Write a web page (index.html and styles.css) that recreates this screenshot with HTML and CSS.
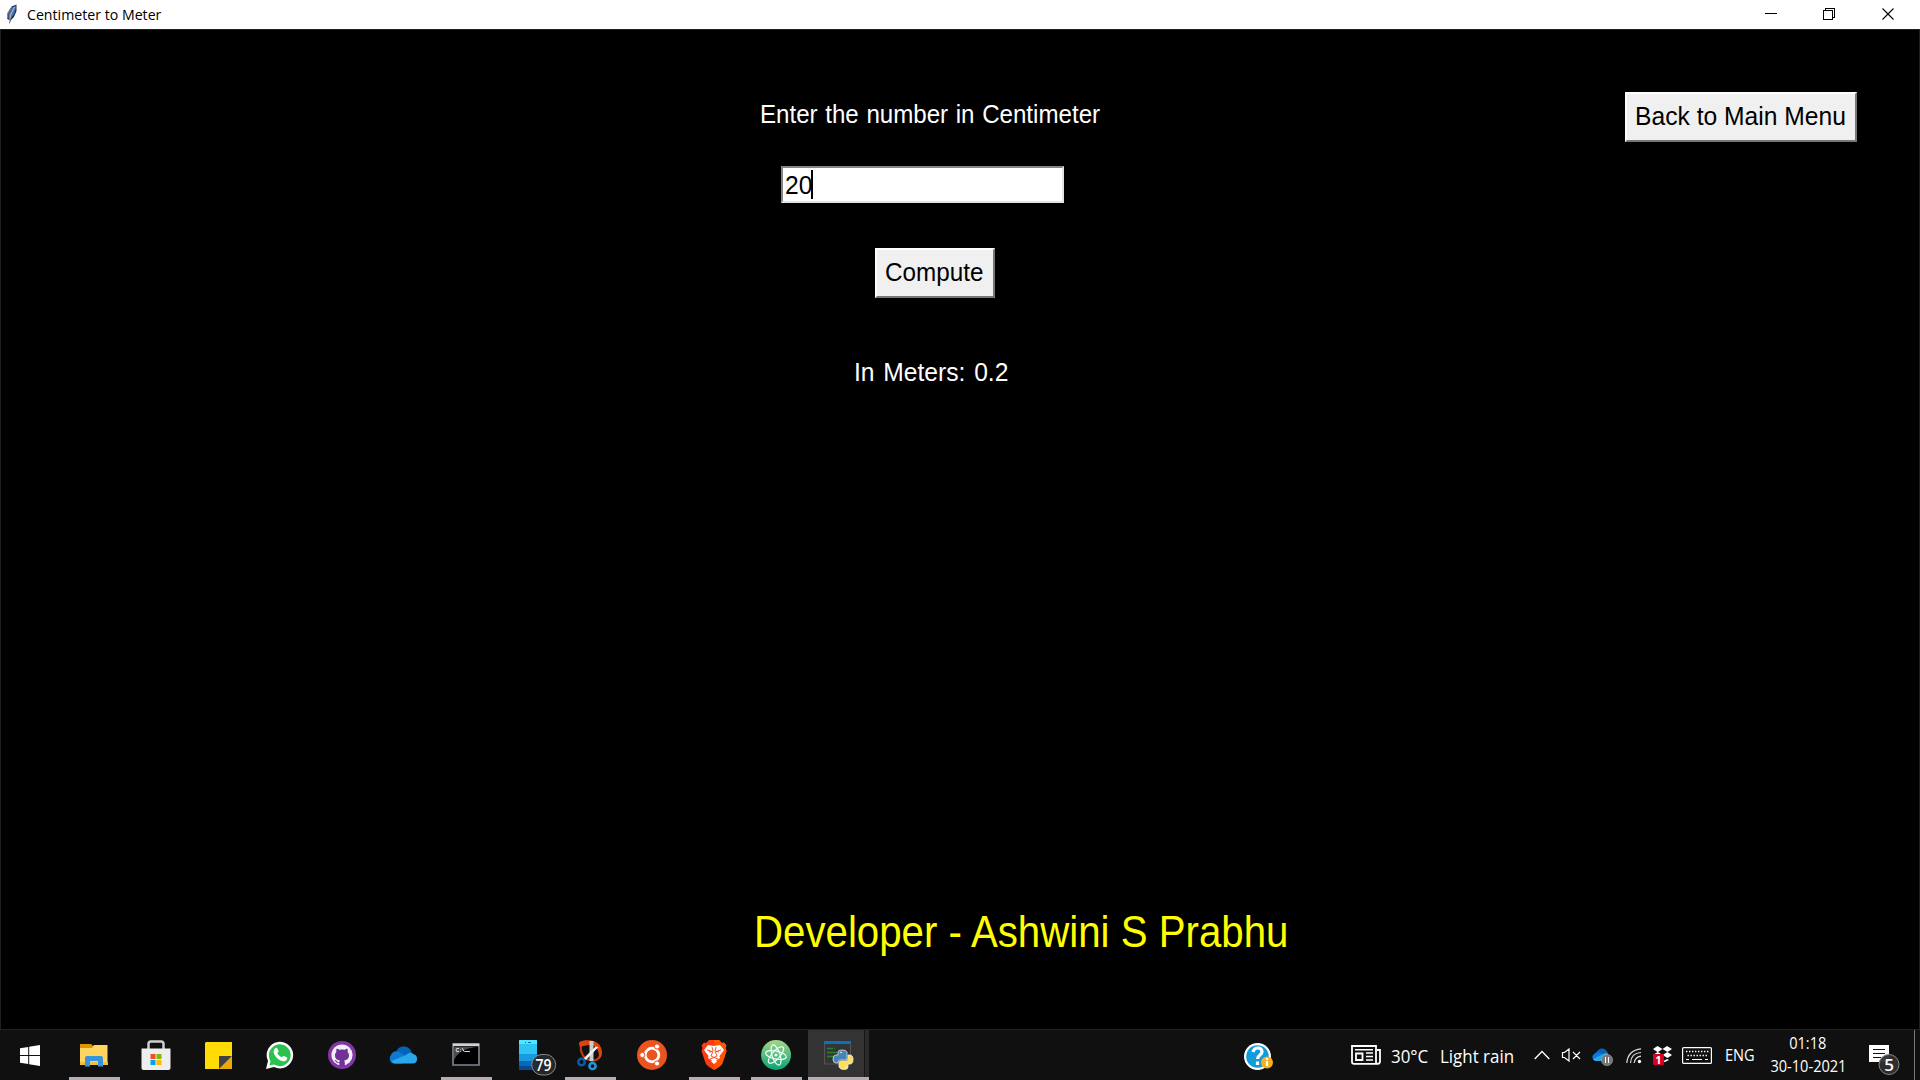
FILE: index.html
```html
<!DOCTYPE html>
<html lang="en">
<head>
<meta charset="utf-8">
<title>Centimeter to Meter</title>
<link rel="stylesheet" href="styles.css">
</head>
<body>
<header class="titlebar">
  <svg class="feather" width="12" height="21" viewBox="0 0 12 21"><path d="M10.5 .5 5.500 2.500 1.500 9 1 14.500l2 1.500L3.500 20 5 16l3-3 2.500-6z" fill="#29313d"/><path d="M9.500 1.500 6.500 3.500 3 9l-.5 5.500L5 14l3-4L9.800 4z" fill="#4979bb"/><path d="M8.500 3 4.500 11l-1 7" stroke="#a9bfdc" fill="none"/><path d="m6 3-4 6-.5 5" stroke="#8b8f96" fill="none"/></svg>
  <h1 class="window-title"><span>Centimeter to Meter</span></h1>
  <svg class="controls" width="130" height="14" viewBox="0 0 130 14" shape-rendering="crispEdges"><path d="M0 6.500h12M58.500 3.500h9v9h-9zM60.500 3v-1.500h9v9H68" fill="none" stroke="#000"/><path d="m117.500 1.500 11 11m0-11-11 11" fill="none" stroke="#000" shape-rendering="auto" stroke-width="1.100"/></svg>
</header>
<main class="window">
  <form class="converter">
    <label class="text prompt"><span>Enter the number in Centimeter</span></label>
    <div class="entry"><span class="text value"><span>20</span></span><i class="caret"></i></div>
    <button type="button" class="tk-button compute"><span>Compute</span></button>
    <div class="text result"><span>In Meters: 0.2</span></div>
  </form>
  <button type="button" class="tk-button back"><span>Back to Main Menu</span></button>
  <footer class="developer"><span>Developer - Ashwini S Prabhu</span></footer>
</main>
<nav class="taskbar">
  <div class="slot start"><svg width="20" height="21" viewBox="0 0 20 21"><path d="M0 3.200 8.200 2v8H0zM9.200 1.800 20 0v10H9.200zM0 11h8.200v8L0 17.800zM9.200 11H20v10L9.200 19.200z" fill="#fff"/></svg></div>
  <div class="slot open"><svg width="28" height="24" viewBox="0 0 28 24"><path d="M0 1h11l2 2h14v5H0z" fill="#dc9700"/><path d="M0 5h12l2-3h13.500v20H0z" fill="#ffd45f"/><path d="M0 19h28v3H0z" fill="#f1bd45"/><path d="M5 23.500V15q0-2 2-2h14q2 0 2 2v8.500h-5V18h-8v5.500z" fill="#3795db"/></svg></div>
  <div class="slot"><svg width="30" height="30" viewBox="0 0 30 30"><path d="M7.500 11V4q0-2.500 2.500-2.500h10q2.500 0 2.500 2.500v7" fill="none" stroke="#cecece" stroke-width="2.500"/><path d="M.5 8.500h29V28q0 2-2 2h-25q-2 0-2-2z" fill="#eee"/><path d="M9.500 14h5v5h-5z" fill="#f25022"/><path d="M15.500 14h5v5h-5z" fill="#7fba00"/><path d="M9.500 20h5v5h-5z" fill="#00a4ef"/><path d="M15.500 20h5v5h-5z" fill="#ffb900"/></svg></div>
  <div class="slot"><svg width="27" height="27" viewBox="0 0 27 27"><path d="M0 1 1 0h26v27H0z" fill="#ffdc05"/><path d="M14 27 27 14v13z" fill="#eaa80b"/><path d="M14 14h13L14 27z" fill="#414141"/></svg></div>
  <div class="slot"><svg width="28" height="28" viewBox="0 0 28 28"><path d="M0 28 2 20A13.300 13.300 0 1 1 8 26z" fill="#fff"/><path d="m3.500 24.500 1-4.500A10.900 10.900 0 1 1 8 23.500z" fill="#2bc14f"/><path d="M9 7.500c1-1 2-1 2.500.2l1 2.300c.3 1-.7 1.500-1.200 2 1 2 2.500 3.500 4.700 4.300.7-.7 1.200-1.700 2-1.400l2.700 1.400c1 .5.400 2-.2 2.700-1.500 1.700-4 1.500-6.500.2-3-1.600-5-4-6-6.500-.7-2-.4-4 1-5.200" fill="#fff"/></svg></div>
  <div class="slot"><svg width="28" height="28" viewBox="0 0 28 28"><circle cx="14" cy="14" r="14" fill="#8236a6"/><circle cx="14" cy="14" r="10.600" fill="#f0eff5"/><path d="M11.300 25v-3.200c-2.500.6-3.300-.7-3.800-1.800l-1.200-1 1.500.1 1.300 1.500c.8.900 1.500.7 2.300.4l.6-1.500c-3-.4-5-1.800-5-5.300 0-1.300.5-2.500 1.400-3.300-.3-1.100-.1-2.300.2-3.200 1.300 0 2.300.7 3.100 1.200 1.500-.4 3.100-.4 4.600 0 .8-.5 1.800-1.200 3.100-1.200.4 1 .5 2.200.2 3.200.9.900 1.400 2 1.400 3.300 0 3.500-2 4.900-5 5.300.7.700.8 1.500.8 2.400V25z" fill="#713196"/></svg></div>
  <div class="slot"><svg width="28" height="18" viewBox="0 0 28 18"><path d="M6 7C7 2 10 .5 14 .5c4 0 7 2.500 8 7.500l-7 4z" fill="#0364b8"/><path d="M4 17.500A5 5 0 0 1 1 9c1-3.500 6-5.500 10-2l9 5-8 5.500z" fill="#0f78d4"/><path d="M16 9c3-3 6-3 7.500-.8C26 8.500 27.500 11 27 14c-.5 2.500-2 3.500-4 3.500H5c-1.500 0-3-1-3.500-2.500z" fill="#28a8ea"/></svg></div>
  <div class="slot open"><svg class="up" width="28" height="23" viewBox="0 0 28 23"><path d="M1 1h26v21H1z" fill="#000" stroke="#7d8791" stroke-width="1.600"/><path d="M1 .5h26v2.700H1z" fill="#ccd2d7"/><path d="M2 4h22Q7 6 2 17z" fill="#4c4c4c"/><path d="M7 5.500q-3-1-3 1.500t3 1.500M8.500 6v.5m0 1.500v.5M10 5l2.500 4M13 8.500h5" fill="none" stroke="#ddd"/></svg></div>
  <div class="slot phone"><svg width="37" height="36" viewBox="0 0 37 36"><path d="M0 1q0-1 1-1h16q1 0 1 1v28q0 1-1 1H1q-1 0-1-1z" fill="#30c4f5"/><path d="M0 1q0-1 1-1h16q1 0 1 1v3H0z" fill="#50e6ff"/><path d="M6 2.500h1m2 0h3" stroke="#0669af"/><path d="M0 14h18v8H0z" fill="#199be2"/><path d="M0 21h18v5H0z" fill="#0669bd"/><path d="M0 26h18v4H0z" fill="#084a87"/><rect x="12.700" y="14.500" width="24" height="20.500" rx="10.200" fill="#252a2f" fill-opacity=".93" stroke="#87898b"/><text x="24.500" y="30.500" text-anchor="middle" textLength="16" lengthAdjust="spacingAndGlyphs" class="badge">79</text></svg></div>
  <div class="slot open"><svg width="26" height="30" viewBox="0 0 26 30"><path d="M5 4C2.500 8 4 19 14 20.500c7 1 10-4 9.500-9C23 7 20 4 17 3.500" fill="none" stroke="#bf370d" stroke-width="2.200"/><path d="M2.500 2C6-.3 13-.3 18 1.500c4 1.500 7 6 7 11 0 3-1 5-3 6.500.5-6-1-11-6-13.500C12 4 7 6 3 6.500 1.500 5 2 3 2.500 2" fill="#dc430e"/><path d="M12.500 1h4v20h-4z" fill="#cbcbcb"/><path d="M21.500 7 9 20l-2.500-1.500 12-12z" fill="#eee"/><circle cx="4.500" cy="22" r="3.200" fill="none" stroke="#075cae" stroke-width="2.500"/><circle cx="15.500" cy="26" r="3.100" fill="none" stroke="#189be1" stroke-width="2.500"/></svg></div>
  <div class="slot"><svg width="30" height="30" viewBox="0 0 30 30"><circle cx="15" cy="15" r="15" fill="#e95420"/><circle cx="15" cy="15" r="6.800" fill="none" stroke="#fff" stroke-width="2.800"/><g fill="#fff" stroke="#e95420"><circle cx="5.300" cy="15" r="2.600"/><circle cx="20" cy="6.500" r="2.600"/><circle cx="20" cy="23.500" r="2.600"/></g></svg></div>
  <div class="slot open"><svg width="26" height="30" viewBox="0 0 26 30"><path d="M8 0h10l3 3 2-.5 2.500 3L24.500 8l1 3-4 12q-1 3-8.500 7-7.500-4-8.500-7l-4-12 1-3L.5 5.500l2.500-3L5 3z" fill="#fb3b12"/><path d="M13 0h5l3 3 2-.5 2.500 3L24.500 8l1 3-4 12q-1 3-8.500 7z" fill="#ff5500"/><path d="m7 5 6 1 6-1 4 5-4.500 6 .5 2-4 2.500 1 1L13 24l-3-2.500 1-1L7 18l.5-2L3 10z" fill="#fff"/><path d="m6 10 5 1.500-3 .5m12-2-5 1.500 3 .5M11 7l1 4-2 5 3 1.500 3-1.500-2-5 1-4M9 19l4-1.500 4 1.500" fill="none" stroke="#fb3b12" stroke-width=".9"/></svg></div>
  <div class="slot open"><svg width="30" height="30" viewBox="0 0 30 30"><defs><linearGradient id="atom" x2="0" y2="1"><stop stop-color="#a7d58a"/><stop offset="1" stop-color="#06a474"/></linearGradient></defs><circle cx="15" cy="15" r="15" fill="url(#atom)"/><g fill="none" stroke="#f1fff8" stroke-width="1.200"><ellipse cx="15" cy="15" rx="10.500" ry="4" transform="rotate(12 15 15)"/><ellipse cx="15" cy="15" rx="10.500" ry="4" transform="rotate(72 15 15)"/><ellipse cx="15" cy="15" rx="10.500" ry="4" transform="rotate(132 15 15)"/></g><circle cx="15" cy="15" r="1.500" fill="#fff"/></svg></div>
  <div class="slot active"><svg width="29" height="29" viewBox="0 0 29 29"><path d="M.5 1h26v22H.5z" fill="#343434" stroke="#555"/><path d="M0 0h27v3H0z" fill="#0873bc"/><path d="M3 7.500h6m2 0h-1M3 11.500h10M3 15.500h8" stroke="#2f7c35" stroke-width="1.300"/><path d="M14 14v-3q0-2 4-2t5 2v6q0 2-2 2h-5q-2 0-2 3h-2q-3 0-3-4t3-4z" fill="#4584b6" stroke="#dedede" stroke-width=".8"/><path d="M24 14h2q3 0 3 4.500t-3 4.500h-2v3q0 2.500-4 2.500T15 26v-4q0-2 2-2h5q2 0 2-3z" fill="#ffde57" stroke="#eee" stroke-width=".8"/><circle cx="17" cy="11.500" r=".8" fill="#fff"/><circle cx="22" cy="26" r=".8" fill="#fff"/></svg></div>
  <div class="tray">
    <svg class="help" width="29" height="28" viewBox="0 0 29 28"><circle cx="13.500" cy="13.500" r="13.500" fill="#fff"/><circle cx="13.500" cy="13.500" r="11.300" fill="#109bdb"/><path d="M9 9q1-4 5-4t4 4c0 3-4.500 3-4.500 7m0 2.500V22" fill="none" stroke="#fff" stroke-width="3.200"/><circle cx="23" cy="19.500" r="6" fill="#f8b11d"/><path d="M23 15v2m0 1v5" stroke="#fff" stroke-width="2.200"/></svg>
    <svg class="news" width="30" height="20" viewBox="0 0 30 20"><path d="M26 18.800H3Q1 18.800 1 17V1h24v16q0 1.800 1.800 1.800T29 17V5h-3" fill="none" stroke="#fff" stroke-width="1.800"/><path d="M4 4.800h18M15 8h7m-7 3.500h7M15 15h7" stroke="#fff" stroke-width="1.400"/><path d="M5 8.500h6.500v6.500H5z" fill="none" stroke="#fff" stroke-width="1.800"/></svg>
    <span class="degrees"><span>30°C</span></span><span class="weather"><span>Light rain</span></span>
    <svg class="chevron" width="16" height="10" viewBox="0 0 16 10"><path d="m.7 9 7.300-7.500L15.300 9" fill="none" stroke="#fff" stroke-width="1.300"/></svg>
    <svg class="speaker" width="19" height="14" viewBox="0 0 19 14"><path d="M.5 4.500h2L7 1v12L2.500 9.500h-2zM11 4l7 7m0-7-7 7" fill="none" stroke="#fff" stroke-width="1.200"/></svg>
    <svg class="cloud" width="21" height="18" viewBox="0 0 21 18"><path d="M4 5Q6 .5 10 .5t6 5l-6 5z" fill="#0364b8"/><path d="M3 13Q-1 10 1 7q3-4 8-2l7 5-4 3z" fill="#0f78d4"/><path d="M1 11 11 6q4-2 5 0l1 7H4q-2 0-3-2" fill="#28a8ea"/><circle cx="15" cy="12" r="5.700" fill="#777" stroke="#aaa" stroke-width=".5"/><path d="M13.500 9v6m3-6v6" stroke="#fff"/></svg>
    <svg class="wifi" width="16" height="16" viewBox="0 0 16 16"><path d="M.8 15Q2 2 15 .8M4.500 15Q5 5 15 4.500M8.200 15Q9 9 15 8.200" fill="none" stroke="#ddd" stroke-width="1.200"/><circle cx="13.500" cy="13.500" r="1.700" fill="#fff"/></svg>
    <svg class="dropbox" width="19" height="19" viewBox="0 0 19 19"><path d="m0 3 4.500-3L9.500 3 14 0l5 3-4.500 3 4.500 3-4.500 3-5-3-5 3L0 9l4.500-3zM9 16l5-3 2 1-4 2z" fill="#fff"/><path d="m5 6 4.500-3 5 3-5 3z" fill="#101010"/><rect y="8" width="11" height="11" rx="1.500" fill="#d70022"/><text x="5.300" y="17.500" text-anchor="middle" class="alert">1</text></svg>
    <svg class="keyboard" width="30" height="17" viewBox="0 0 30 17"><rect x=".6" y=".6" width="28.800" height="15.800" rx="1" fill="none" stroke="#fff" stroke-width="1.200"/><path d="M4 4.500h23M5.500 8.500h20" stroke="#fff" stroke-width="1.400" stroke-dasharray="1.400 1.600"/><path d="M4 12.500h3m3 0h10m3 0h3" stroke="#fff" stroke-width="1.200"/></svg>
    <span class="lang"><span>ENG</span></span>
    <div class="clock"><span>01:18</span><span>30-10-2021</span></div>
    <svg class="notes" width="31" height="31" viewBox="0 0 31 31"><path d="M0 0h20v17h-7l-3 3v-3H0z" fill="#fff"/><path d="M4 4.500h12M4 8.500h12M4 12.500h8" stroke="#111"/><circle cx="20" cy="19.500" r="10" fill="#303030" fill-opacity=".95" stroke="#858585"/><text x="20" y="25.800" text-anchor="middle" class="badge">5</text></svg>
    <i class="show-desktop"></i>
  </div>
</nav>
</body>
</html>
```
FILE: styles.css
```css
* { box-sizing: border-box; }
body { margin: 0; width: 1920px; height: 1080px; overflow: hidden; display: flex; flex-direction: column; background: #000; font-family: "Liberation Sans", Arial, sans-serif; }
svg { display: block; flex: none; overflow: visible; }
span { white-space: nowrap; }
.titlebar { height: 29px; background: #fff; display: flex; align-items: flex-start; padding: 4px 0 0 6px; font-family: "Open Sans", "Noto Sans", sans-serif; }
.window-title { margin: 0 0 0 9px; width: 1738px; font-size: 14.7px; font-weight: 400; line-height: 21px; color: #000; }
.window-title span { display: inline-block; transform: scaleX(.964); transform-origin: left; }
.controls { margin-top: 3px; }
.window { height: 1000px; border: solid #202020; border-width: 1px 1px 0; display: grid; grid-template-columns: 760px 864px 232px; grid-template-rows: 870px 80px; align-items: start; color: #fff; }
.converter { grid-column: 2; display: flex; flex-direction: column; align-items: flex-start; padding-top: 68px; }
.text, .tk-button { font-size: 26.500px; line-height: 32px; }
.text > span, .tk-button > span, .developer > span { display: inline-block; transform: scaleX(.93); transform-origin: left; }
.prompt { width: 343px; height: 32px; margin-left: -1px; }
.prompt > span { transform: scaleX(.91); word-spacing: 1px; }
.entry { width: 283px; height: 37px; margin: 36px 0 0 20px; background: #fff; border: 2px solid; border-color: #858585 #e3e3e3 #e3e3e3 #858585; color: #000; display: flex; padding-left: 2px; }
.value { width: 26px; height: 32px; padding-top: 1px; }
.caret { width: 2px; height: 29px; margin-top: 2px; background: #000; }
.tk-button { height: 50px; border: 2px solid; border-color: #fff #777 #777 #fff; border-radius: 0; background: #f0f0f0; color: #000; font-family: inherit; padding: 0 0 2px 8px; text-align: left; }
.compute { width: 120px; margin: 45px 0 0 114px; }
.compute > span { transform: scaleX(.915); }
.result { height: 32px; margin: 58px 0 0 93px; }
.result > span { transform: scaleX(.93); word-spacing: 2px; }
.back { width: 232px; margin-top: 62px; }
.developer { grid-column: 2; grid-row: 2; font-size: 45px; line-height: 52px; color: #ff0; margin: 6px 0 0 -7px; }
.developer > span { transform: scaleX(.894); }
.taskbar { height: 51px; background: #101010; border-top: 1px solid #222; display: flex; color: #fff; font-family: "Open Sans", "Noto Sans", sans-serif; }
.slot { width: 62px; flex: none; height: 50px; display: flex; align-items: center; justify-content: center; }
.start { width: 63px; padding-right: 3px; }
.open { background: linear-gradient(#b5adb3, #b5adb3) center bottom / 51px 3px no-repeat; }
.up { margin-bottom: 2px; }
.phone { padding: 5px 0 0 18px; }
.active { width: 61px; margin-left: 1px; background: linear-gradient(#b5adb3, #b5adb3) bottom / 100% 3px no-repeat, linear-gradient(90deg, #333 56px, #151515 56px, #151515 57px, #2a2a2a 57px); }
.tray { display: flex; align-items: flex-start; }
.badge { font: 600 17px "Open Sans", sans-serif; fill: #fff; }
.alert { font: 700 11px "Open Sans", sans-serif; fill: #fff; }
.help { margin: 13px 0 0 375px; }
.news { margin: 15px 0 0 78px; }
.degrees, .weather { font-size: 18px; line-height: 26px; margin-top: 13px; }
.degrees { width: 49px; margin-left: 10px; }
.weather { width: 75px; }
.degrees span, .weather span, .lang span, .clock span { display: inline-block; transform: scaleX(.94); transform-origin: left; }
.chevron { margin: 20px 0 0 19px; }
.speaker { margin: 18px 0 0 12px; }
.cloud { margin: 18px 0 0 11px; }
.wifi { margin: 18px 0 0 13px; }
.dropbox { margin: 16px 0 0 11px; }
.keyboard { margin: 17px 0 0 10px; }
.lang { font-size: 15.500px; line-height: 22px; width: 27px; margin: 14px 0 0 13px; }
.clock { width: 76px; margin: 2px 0 0 18px; font-size: 15.500px; line-height: 23px; display: flex; flex-direction: column; align-items: center; }
.clock span { transform-origin: center; }
.notes { margin: 15px 0 0 23px; }
.show-desktop { width: 1px; height: 50px; background: #777; margin-left: 14px; }
```
